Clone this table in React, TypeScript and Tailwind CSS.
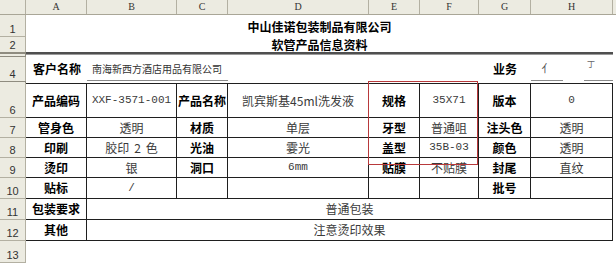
import type { ReactNode } from 'react'
import clsx from 'clsx'

// column widths A..H
const W = ['w-[61px]', 'w-[90px]', 'w-[51px]', 'w-[141px]', 'w-[51px]', 'w-[59px]', 'w-[52px]', 'w-[82px]']
const LETTERS = ['A', 'B', 'C', 'D', 'E', 'F', 'G', 'H']

const cjk = "font-['Noto_Sans_CJK_SC',sans-serif]"
const mono = "font-['Liberation_Mono','Noto_Sans_CJK_SC',monospace]"

type Cell = { t?: ReactNode; b?: boolean; m?: boolean }

function RowHead({ n, className }: { n?: string; className?: string }) {
  return (
    <div
      className={clsx(
        "w-[26px] shrink-0 flex items-end justify-center bg-[#ecebe1] border-r border-b border-[#b3b0a2] pb-[1px] text-[11px] leading-none text-[#333] font-['Liberation_Sans',sans-serif]",
        className,
      )}
    >
      {n}
    </div>
  )
}

function CellBox({ c, w, top }: { c: Cell; w: string; top?: boolean }) {
  return (
    <div
      className={clsx(
        w,
        'shrink-0 flex items-center justify-center border-r border-b border-[#1f1f1f] leading-none whitespace-nowrap',
        top && 'border-t',
        c.b ? 'font-bold text-black text-[12px]' : 'text-[#3a3a3a]',
        !c.b && (c.m ? 'text-[11px]' : 'text-[12px]'),
        c.m && !c.b ? mono : cjk,
      )}
    >
      {c.t}
    </div>
  )
}

function TableRow({ n, h, cells, top }: { n: string; h: string; cells: Cell[]; top?: boolean }) {
  return (
    <div className={clsx('flex', h)}>
      <RowHead n={n} />
      {cells.map((c, i) => (
        <CellBox key={i} c={c} w={W[i]} top={top} />
      ))}
    </div>
  )
}

function MergedRow({ n, h, label, text }: { n: string; h: string; label: string; text: string }) {
  return (
    <div className={clsx('flex', h)}>
      <RowHead n={n} />
      <CellBox c={{ t: label, b: true }} w={W[0]} />
      <div className={clsx('w-[526px] shrink-0 flex items-center justify-center border-r border-b border-[#1f1f1f] text-[12px] text-[#3a3a3a] leading-none', cjk)}>
        {text}
      </div>
    </div>
  )
}

export default function App() {
  return (
    <div className="relative w-[616px] h-[263px] overflow-hidden bg-white">
      {/* column header */}
      <div className="flex h-[15px] bg-[#ecebe1] border-b border-[#a9a697]">
        <div className="w-[26px] shrink-0 border-r border-[#b3b0a2]" />
        {LETTERS.map((l, i) => (
          <div
            key={l}
            className={clsx(W[i], "shrink-0 flex items-center justify-center border-r border-[#b3b0a2] text-[10px] leading-none text-[#333] font-['Liberation_Serif',serif]")}
          >
            {l}
          </div>
        ))}
      </div>

      {/* title rows */}
      <div className="flex h-[22px]">
        <RowHead n="1" />
        <div className={clsx('w-[587px] flex items-center justify-center pt-[1px] text-[12px] font-bold text-black', cjk)}>中山佳诺包装制品有限公司</div>
      </div>
      <div className="flex h-[15px]">
        <RowHead n="2" className="border-b-0" />
        <div className={clsx('w-[587px] flex items-center justify-center text-[12px] font-bold text-black', cjk)}>软管产品信息资料</div>
      </div>
      {/* hidden row 3 */}
      <div className="flex h-[5px]">
        <div className="w-[26px] shrink-0 bg-[#ecebe1] border-r border-t-2 border-b border-[#8f8c80]" />
        <div className="w-[587px]">
          <div className="h-[2px] bg-[#4f4f4f]" />
          <div className="h-[1px] bg-[#9a9a9a]" />
        </div>
      </div>

      {/* customer row */}
      <div className="flex h-[24px]">
        <RowHead n="4" className="border-b-0" />
        <div className={clsx(W[0], 'shrink-0 flex items-center pl-[7px] text-[12px] font-bold text-black', cjk)}>客户名称</div>
        <div className={clsx('w-[141px] shrink-0 flex items-center pl-[5px] text-[10px] text-[#333] border-b border-[#8a8a8a]', cjk)}>
          南海新西方酒店用品有限公司
        </div>
        <div className="w-[251px] shrink-0" />
        <div className={clsx(W[6], 'shrink-0 flex items-center justify-center text-[12px] font-bold text-black', cjk)}>业务</div>
        <div className="flex w-[82px] shrink-0">
          <div className={clsx('w-[32px] flex items-center justify-center text-[11px] text-[#555] border-b border-[#8a8a8a]', cjk)}>亻</div>
          <div className="w-[21px]" />
          <div className={clsx('w-[29px] flex items-start pl-[3px] pt-[3px] text-[8px] leading-none text-[#666] border-b border-[#8a8a8a]', cjk)}>丁</div>
        </div>
      </div>
      {/* hidden row 5 */}
      <div className="flex h-[2px]">
        <div className="w-[26px] shrink-0 bg-[#ecebe1] border-r border-t border-[#8f8c80]" />
      </div>

      <TableRow
        n="6"
        h="h-[35px]"
        top
        cells={[
          { t: '产品编码', b: true },
          { t: 'XXF-3571-001', m: true },
          { t: '产品名称', b: true },
          { t: '凯宾斯基45ml洗发液' },
          { t: '规格', b: true },
          { t: '35X71', m: true },
          { t: '版本', b: true },
          { t: '0', m: true },
        ]}
      />
      <TableRow
        n="7"
        h="h-[20px]"
        cells={[
          { t: '管身色', b: true },
          { t: '透明' },
          { t: '材质', b: true },
          { t: '单层' },
          { t: '牙型', b: true },
          { t: '普通咀' },
          { t: '注头色', b: true },
          { t: '透明' },
        ]}
      />
      <TableRow
        n="8"
        h="h-[20px]"
        cells={[
          { t: '印刷', b: true },
          {
            t: (
              <>
                胶印<span className="px-[5px]">2</span>色
              </>
            ),
          },
          { t: '光油', b: true },
          { t: '霎光' },
          { t: '盖型', b: true },
          { t: '35B-03', m: true },
          { t: '颜色', b: true },
          { t: '透明' },
        ]}
      />
      <TableRow
        n="9"
        h="h-[20px]"
        cells={[
          { t: '烫印', b: true },
          { t: '银' },
          { t: '洞口', b: true },
          { t: '6mm', m: true },
          { t: '贴膜', b: true },
          { t: '不贴膜' },
          { t: '封尾', b: true },
          { t: '直纹' },
        ]}
      />
      <TableRow
        n="10"
        h="h-[21px]"
        cells={[{ t: '贴标', b: true }, { t: '/', m: true }, {}, {}, {}, {}, { t: '批号', b: true }, {}]}
      />
      <MergedRow n="11" h="h-[21px]" label="包装要求" text="普通包装" />
      <MergedRow n="12" h="h-[21px]" label="其他" text="注意烫印效果" />
      <div className="flex h-[22px]">
        <RowHead n="13" />
      </div>

      {/* red highlight box */}
      <div className="absolute left-[368px] top-[81px] w-[110px] h-[84px] border border-[#b8393b]" />
    </div>
  )
}
